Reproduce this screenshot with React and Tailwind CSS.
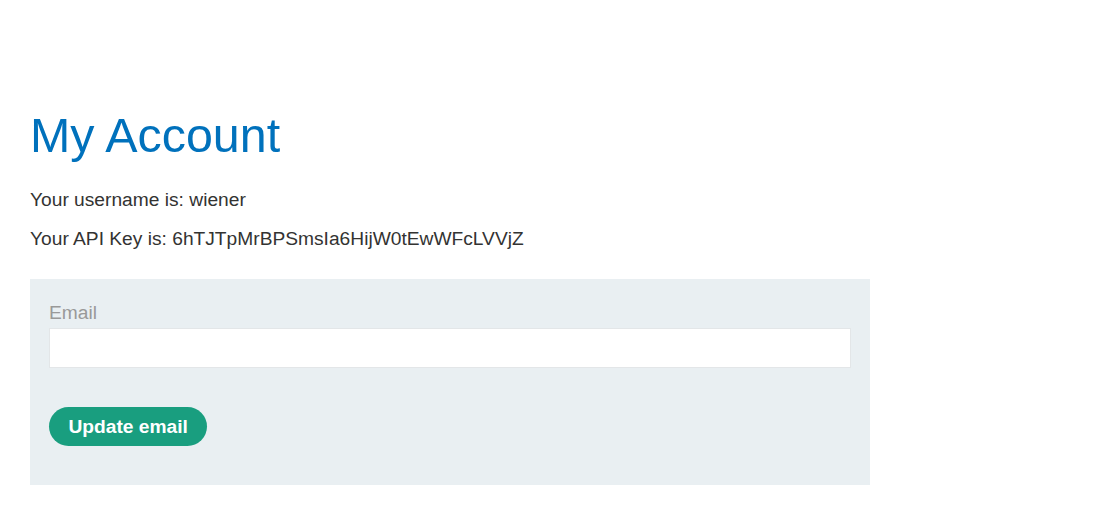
export default function App() {
  return (
    <div className="min-h-screen bg-white font-['Liberation_Sans',Arial,sans-serif] text-[#333332]">
      <div className="px-[30px] pt-[108px]">
        <h1 className="text-[48.4px] leading-[55px] text-[#0071bc]">My Account</h1>
        <p className="mt-[25px] text-[19.2px] leading-[24px]">Your username is: wiener</p>
        <p className="mt-[15px] text-[19.2px] leading-[24px]">
          Your API Key is: 6hTJTpMrBPSmsIa6HijW0tEwWFcLVVjZ
        </p>

        <form
          className="mt-[28px] w-[840px] bg-[#e9eff2] px-[19px] pt-[22px] pb-[39px]"
          onSubmit={(e) => e.preventDefault()}
        >
          <label className="block text-[19.2px] leading-[24px] text-[#999]">Email</label>
          <input
            type="email"
            name="email"
            className="mt-[3px] block h-[40px] w-full border border-[#e3e6e8] bg-white px-2 text-[16px] outline-none"
          />
          <button
            type="submit"
            className="mt-[39px] h-[39px] rounded-full bg-[#199e7f] px-[19.5px] text-[19.2px] font-bold leading-[39px] text-white"
          >
            Update email
          </button>
        </form>
      </div>
    </div>
  );
}
